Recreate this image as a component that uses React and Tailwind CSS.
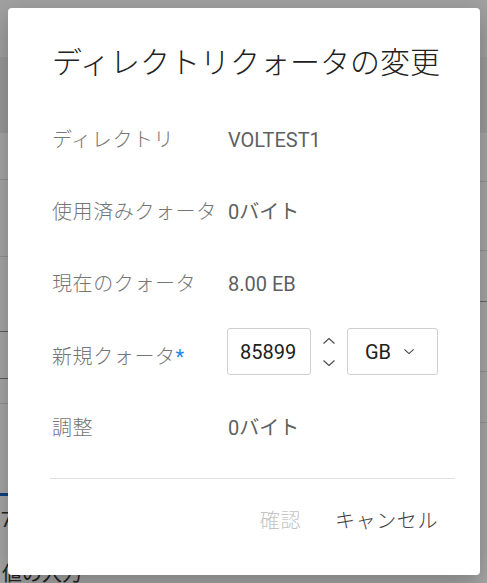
import React from 'react';

const font = { fontFamily: 'Roboto, "Noto Sans CJK JP", sans-serif' };

function ChevronUp({ className }) {
  return (
    <svg viewBox="0 0 12 6" className={className} fill="none">
      <polyline points="0.5,5.5 6,0.5 11.5,5.5" stroke="#555" strokeWidth="1.3" />
    </svg>
  );
}

function ChevronDown({ className, color = '#555' }) {
  return (
    <svg viewBox="0 0 12 6" className={className} fill="none">
      <polyline points="0.5,0.5 6,5.5 11.5,0.5" stroke={color} strokeWidth="1.3" />
    </svg>
  );
}

function InfoRow({ label, value }) {
  return (
    <div className="flex h-[72px] items-center">
      <div className="w-[176px] shrink-0 text-[20px] font-light tracking-[0.6px] text-[#757575]">{label}</div>
      <div className="text-[20px] text-[#5f5f5f]">{value}</div>
    </div>
  );
}

function BackgroundPage() {
  return (
    <div className="flex h-[583px] flex-col bg-white">
      <div className="h-[57px] shrink-0 bg-[#f7f7f7]" />
      <div className="flex flex-1">
        <div className="flex w-[120px] shrink-0 flex-col">
          <div className="h-[76px] shrink-0 bg-[#ececec]" />
          <div className="h-[47px] shrink-0 border-b border-[#e0e0e0]" />
          <div className="h-[77px] shrink-0 border-b border-[#e0e0e0]" />
          <div className="h-[75px] shrink-0 border-b border-[#8a8a8a]" />
          <div className="h-[47px] shrink-0 border-b border-[#8a8a8a]" />
          <div className="h-[25px] shrink-0 border-b border-[#e0e0e0]" />
          <div className="h-[89px] shrink-0" />
          <div className="h-[3px] shrink-0 bg-[#1565c0]" />
          <div className="h-[34px] shrink-0 pl-[1px] pt-[14px] text-[20px] leading-[20px] text-[#333]">7</div>
          <div className="pl-[2px] pt-[32px] text-[20px] leading-[24px] text-[#333]">値の入力</div>
        </div>
        <div className="flex flex-1 flex-col">
          <div className="h-[76px] shrink-0 bg-[#f0f0f0]" />
          <div className="h-[49px] shrink-0 border-b border-[#e0e0e0]" />
          <div className="h-[69px] shrink-0 border-b border-[#e0e0e0]" />
          <div className="h-[51px] shrink-0 border-b border-[#9a9a9a]" />
          <div className="h-[70px] shrink-0 border-b border-[#e0e0e0]" />
          <div className="h-[51px] shrink-0 border-b border-[#e0e0e0]" />
        </div>
      </div>
    </div>
  );
}

function App() {
  return (
    <div className="relative h-[583px] w-[487px] overflow-hidden" style={font}>
      <BackgroundPage />
      <div className="absolute inset-0 bg-black/35" />

      <div className="absolute left-2 top-2 flex h-[567px] w-[472px] flex-col rounded-[4px] bg-white shadow-[0_8px_24px_rgba(0,0,0,0.25)]">
        <h2 className="pl-[44px] pt-[33px] text-[30px] font-light leading-[44px] text-[#212121]">
          ディレクトリクォータの変更
        </h2>

        <div className="mt-[19px] flex flex-col pl-[44px]">
          <InfoRow label="ディレクトリ" value="VOLTEST1" />
          <InfoRow label="使用済みクォータ" value="0バイト" />
          <InfoRow label="現在のクォータ" value="8.00 EB" />

          <div className="flex h-[72px]">
            <div className="w-[175px] shrink-0 self-center pt-[2px] text-[20px] font-light tracking-[0.6px] text-[#757575]">
              新規クォータ<span className="font-normal text-[#1e88e5]">*</span>
            </div>
            <div className="mt-[8px] flex h-[47px] items-center self-start">
              <div className="flex h-[47px] w-[84px] items-center rounded-[3px] border border-[#cfcfcf] pl-[12px] text-[20px] text-[#212121]">
                85899
              </div>
              <div className="flex w-[36px] flex-col items-center gap-[16px]">
                <ChevronUp className="h-[6px] w-[12px]" />
                <ChevronDown className="h-[6px] w-[12px]" />
              </div>
              <div className="flex h-[47px] w-[91px] items-center rounded-[3px] border border-[#cfcfcf] pl-[17px] text-[20px] text-[#212121]">
                GB
                <ChevronDown className="ml-[13px] h-[5px] w-[10px]" color="#444" />
              </div>
            </div>
          </div>

          <InfoRow label="調整" value="0バイト" />
        </div>

        <div className="ml-[42px] mr-[25px] mt-[14px] border-t border-[#e0e0e0]" />

        <div className="mt-[27px] flex items-center justify-end gap-[34px] pr-[42px] text-[20px] font-light tracking-[0.6px]">
          <button type="button" disabled className="text-[#c4c4c4]">
            確認
          </button>
          <button type="button" className="text-[#424242]">
            キャンセル
          </button>
        </div>
      </div>
    </div>
  );
}

export default App;
